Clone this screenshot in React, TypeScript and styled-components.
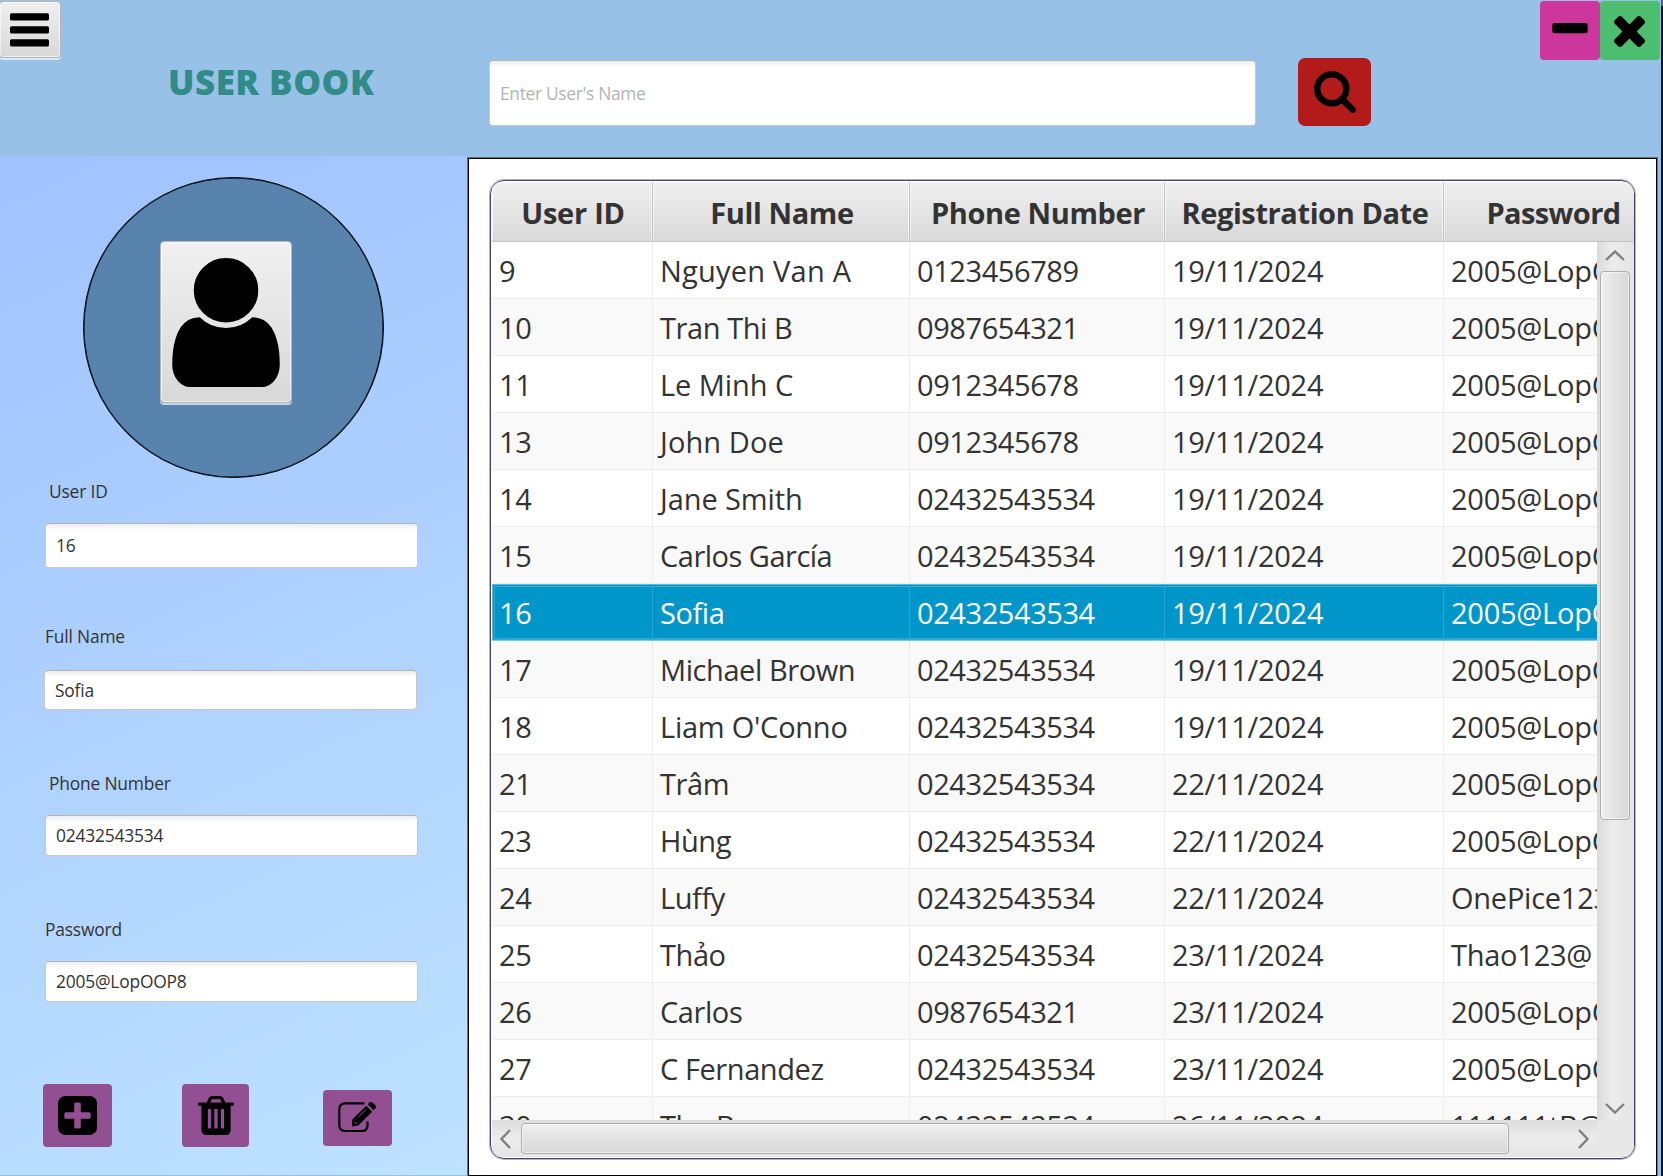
import React from "react";
import styled, { createGlobalStyle, css } from "styled-components";

const Global = createGlobalStyle`
  * { box-sizing: border-box; }
  body { margin: 0; overflow: hidden; }
  button { font: inherit; cursor: pointer; }
`;

const Window = styled.div`
  width: 1663px;
  height: 1176px;
  display: grid;
  grid-template-columns: 467px 1191px 3px 2px;
  grid-template-rows: 156px 1020px;
  background: #97c1e7;
  font-family: "Open Sans", "Noto Sans", sans-serif;
  color: #333333;
  overflow: hidden;
`;

const WindowEdge = styled.div`
  grid-column: 4;
  grid-row: 1 / 3;
  background: linear-gradient(#5b6068 0 6px, #10141c 6px);
`;

const Header = styled.header`
  grid-column: 1 / 4;
  grid-row: 1;
  display: flex;
  align-items: flex-start;
`;

const jfxButton = css`
  border: 1px solid #b5b5b5;
  background: linear-gradient(#f0f0f0, #d8d8d8);
  box-shadow: inset 0 0 0 1px rgba(255, 255, 255, 0.6), 0 2px 0 rgba(255, 255, 255, 0.65);
  border-radius: 4px;
`;

const MenuButton = styled.button`
  ${jfxButton}
  width: 62px;
  height: 57px;
  margin: 1px 0 0 -1px;
  padding: 10px 0 0 10px;
  display: flex;
`;

const Title = styled.h1`
  margin: 59px 0 0 107px;
  width: 321px;
  font-size: 35px;
  line-height: 46px;
  font-weight: 800;
  letter-spacing: 0.48px;
  color: #318b87;
  white-space: nowrap;
`;

const inputLook = css`
  border: 1px solid #c8c8c8;
  border-top-color: #b4b4b4;
  border-radius: 4px;
  background: linear-gradient(#ececec, #ffffff 6px);
  font-family: inherit;
  color: #333333;
  outline: none;
`;

const SearchInput = styled.input`
  ${inputLook}
  width: 767px;
  height: 66px;
  margin-top: 60px;
  padding: 0 10px;
  font-size: 17.4px;
  letter-spacing: -0.32px;
  &::placeholder { color: #b3b3b3; opacity: 1; }
`;

const ColorButton = styled.button<{ $w: number; $h: number; $bg: string; $r?: number }>`
  flex: none;
  width: ${(p) => p.$w}px;
  height: ${(p) => p.$h}px;
  border: 0;
  padding: 0;
  border-radius: ${(p) => p.$r ?? 4}px;
  background: ${(p) => p.$bg};
  display: flex;
  align-items: center;
  justify-content: center;
`;

const SearchButton = styled(ColorButton)`
  margin: 58px 0 0 42px;
`;

const WindowButtons = styled.div`
  display: flex;
  margin: 1px 1px 0 auto;
  svg { margin: 1px 1px 0 0; }
`;

const Sidebar = styled.aside`
  grid-column: 1;
  grid-row: 2;
  background: linear-gradient(155.4deg, #a0c2ff, #bee2ff);
  border-bottom: 1px solid #97c1e7;
  display: flex;
  flex-direction: column;
`;

const Avatar = styled.div`
  width: 301px;
  height: 301px;
  margin: 21px 0 0 83px;
  border-radius: 50%;
  border: 1px solid #000;
  box-shadow: inset 0 0 0 0.5px #000;
  background: #5783ad;
  display: flex;
  flex: none;
`;

const AvatarButton = styled.button`
  ${jfxButton}
  width: 132px;
  height: 162px;
  margin: 63px 0 0 76px;
  padding: 0;
  display: flex;
  align-items: flex-start;
  justify-content: center;
  svg { margin-top: 16px; }
`;

const Field = styled.label<{ $gap: number; $h: number; $shift?: number; $indent?: number; $space: number }>`
  display: flex;
  flex-direction: column;
  margin-top: ${(p) => p.$gap}px;
  margin-left: ${(p) => 45 - (p.$shift ?? 0)}px;
  width: 373px;
  span {
    font-size: 17.4px;
    line-height: 24px;
    letter-spacing: -0.18px;
    padding-left: ${(p) => (p.$indent ?? 0) + (p.$shift ?? 0)}px;
  }
  input {
    ${inputLook}
    margin-top: ${(p) => p.$space}px;
    height: ${(p) => p.$h}px;
    padding: 0 10px 1px;
    font-size: 17.4px;
    letter-spacing: -0.2px;
  }
`;

const Actions = styled.div`
  display: flex;
  margin: 82px 0 0 43px;
  align-items: flex-start;
`;

const DeleteButton = styled(ColorButton)`
  margin-left: 70px;
`;

const EditButton = styled(ColorButton)`
  margin: 6px 0 0 74px;
`;

const Content = styled.main`
  grid-column: 2;
  grid-row: 2;
  margin: 2px 1px 0;
  border: 1px solid #000;
  box-shadow: 0 0 0 1px rgba(0, 0, 0, 0.4);
  background: #fff;
  padding: 21px 21px 0;
`;

const TableFrame = styled.div`
  width: 1145px;
  height: 979px;
  border: 1px solid #45436b;
  box-shadow: 0 0 0 1px rgba(69, 67, 107, 0.4);
  border-radius: 14px;
  padding: 1px 0 0 1px;
  overflow: hidden;
`;

const columns = "161px 257px 255px 279px 305px";

const TableHead = styled.div`
  display: grid;
  grid-template-columns: ${columns};
  height: 60px;
  border-bottom: 1px solid #c3c3c3;
  overflow: hidden;
`;

const HeadCell = styled.div<{ $tracking: number }>`
  border-right: 1px solid #c3c3c3;
  box-shadow: inset 0 0 0 1px rgba(255, 255, 255, 0.55);
  background: linear-gradient(#f0f0f0, #d8d8d8);
  font-weight: 700;
  font-size: 29px;
  letter-spacing: ${(p) => p.$tracking}px;
  line-height: 62px;
  padding-left: 2px;
  text-align: center;
  white-space: nowrap;
  &:last-child { padding-right: 87px; }
`;

const TableBody = styled.div`
  display: grid;
  grid-template-columns: 1105px 37px;
  grid-template-rows: 878px 37px;
`;

const Viewport = styled.div`
  overflow: hidden;
`;

const Row = styled.div<{ $odd: boolean; $selected: boolean }>`
  display: grid;
  grid-template-columns: ${columns};
  width: 1257px;
  height: 57px;
  background: ${(p) => (p.$odd ? "#f9f9f9" : "#ffffff")};
  border-bottom: 1px solid #ededed;
  ${(p) =>
    p.$selected &&
    css`
      background: #0096c9;
      color: #fff;
      border-bottom: 1px solid #86cbe3;
      box-shadow: inset 1px 1px 0 #5cb9da, inset 2px 2px 0 #0096c9, inset 3px 3px 0 #30a9d3, inset 0 -2px 0 #30a9d3;
    `}
`;

const Cell = styled.div<{ $selected: boolean; $tracking: number }>`
  border-right: 1px solid ${(p) => (p.$selected ? "#29a6d1" : "#ededed")};
  padding-left: 7px;
  font-size: 29px;
  line-height: 58px;
  letter-spacing: ${(p) => p.$tracking}px;
  white-space: pre;
`;

const VBar = styled.div`
  background: linear-gradient(90deg, #dcdcdc, #ececec 40%, #e4e4e4);
  border-left: 1px solid #dcdcdc;
  display: flex;
  flex-direction: column;
  align-items: center;
  padding: 8px 3px 6px 0;
`;

const VThumb = styled.div`
  width: 30px;
  height: 549px;
  margin: 10px 0 auto 0;
  border: 1px solid #adadad;
  border-radius: 4px;
  background: linear-gradient(90deg, #eeeeee, #d8d8d8);
  box-shadow: inset 0 0 0 1px rgba(255, 255, 255, 0.5);
`;

const HBar = styled.div`
  background: linear-gradient(#dedede, #ececec 50%, #e4e4e4);
  border-top: 1px solid #dcdcdc;
  display: flex;
  align-items: center;
  padding: 0 8px 1px;
`;

const HThumb = styled.div`
  width: 988px;
  height: 31px;
  margin: 0 auto 0 10px;
  border: 1px solid #adadad;
  border-radius: 4px;
  background: linear-gradient(#eeeeee, #d8d8d8);
  box-shadow: inset 0 0 0 1px rgba(255, 255, 255, 0.5);
`;

const Corner = styled.div`
  background: #e8e8e8;
`;

const Glyph = ({ d, box, w, h }: { d: string; box: string; w: number; h: number }) => (
  <svg width={w} height={h} viewBox={box} fill="#000" fillRule="evenodd">
    <path d={d} />
  </svg>
);

const Chevron = ({ w, h, points }: { w: number; h: number; points: string }) => (
  <svg width={w} height={h} viewBox={`0 0 ${w} ${h}`} fill="none" stroke="#808080" strokeWidth="2.4">
    <polyline points={points} />
  </svg>
);

const USER =
  "M1536 1399q0 109-62.5 187t-150.5 78h-854q-88 0-150.5-78t-62.5-187q0-85 8.5-160.5t31.5-152 58.5-131 94-89 134.5-34.5q131 128 313 128t313-128q76 0 134.5 34.5t94 89 58.5 131 31.5 152 8.5 160.5zm-256-887q0 159-112.5 271.5t-271.5 112.5-271.5-112.5-112.5-271.5 112.5-271.5 271.5-112.5 271.5 112.5 112.5 271.5z";
const SEARCH =
  "M1216 832q0-185-131.5-316.5t-316.5-131.5-316.5 131.5-131.5 316.5 131.5 316.5 316.5 131.5 316.5-131.5 131.5-316.5zm512 832q0 52-38 90t-90 38q-54 0-90-38l-343-342q-179 124-399 124-143 0-273.5-55.5t-225-150-150-225-55.5-273.5 55.5-273.5 150-225 225-150 273.5-55.5 273.5 55.5 225 150 150 225 55.5 273.5q0 220-124 399l343 343q37 37 37 90z";
const TIMES =
  "M1490 1322q0 40-28 68l-136 136q-28 28-68 28t-68-28l-294-294-294 294q-28 28-68 28t-68-28l-136-136q-28-28-28-68t28-68l294-294-294-294q-28-28-28-68t28-68l136-136q28-28 68-28t68 28l294 294 294-294q28-28 68-28t68 28l136 136q28 28 28 68t-28 68l-294 294 294 294q28 28 28 68z";
const TRASH =
  "M704 1376v-704q0-14-9-23t-23-9h-64q-14 0-23 9t-9 23v704q0 14 9 23t23 9h64q14 0 23-9t9-23zm256 0v-704q0-14-9-23t-23-9h-64q-14 0-23 9t-9 23v704q0 14 9 23t23 9h64q14 0 23-9t9-23zm256 0v-704q0-14-9-23t-23-9h-64q-14 0-23 9t-9 23v704q0 14 9 23t23 9h64q14 0 23-9t9-23zm-544-992h448l-48-117q-7-9-17-11h-317q-10 2-17 11zm928 32v64q0 14-9 23t-23 9h-96v948q0 83-47 143.5t-113 60.5h-832q-66 0-113-58.5t-47-141.5v-952h-96q-14 0-23-9t-9-23v-64q0-14 9-23t23-9h309l70-167q15-37 54-63t79-26h320q40 0 79 26t54 63l70 167h309q14 0 23 9t9 23z";

type User = [string, string, string, string, string];
const LOP = "2005@LopOOP8";
const users: User[] = [
  ["9", "Nguyen Van A", "0123456789", "19/11/2024", LOP],
  ["10", "Tran Thi B", "0987654321", "19/11/2024", LOP],
  ["11", "Le Minh C", "0912345678", "19/11/2024", LOP],
  ["13", "John Doe", "0912345678", "19/11/2024", LOP],
  ["14", "Jane Smith", "02432543534", "19/11/2024", LOP],
  ["15", "Carlos García", "02432543534", "19/11/2024", LOP],
  ["16", "Sofia", "02432543534", "19/11/2024", LOP],
  ["17", "Michael Brown", "02432543534", "19/11/2024", LOP],
  ["18", "Liam O'Conno", "02432543534", "19/11/2024", LOP],
  ["21", "Trâm", "02432543534", "22/11/2024", LOP],
  ["23", "Hùng", "02432543534", "22/11/2024", LOP],
  ["24", "Luffy", "02432543534", "22/11/2024", "OnePice123"],
  ["25", "Thảo", "02432543534", "23/11/2024", "Thao123@"],
  ["26", "Carlos", "0987654321", "23/11/2024", LOP],
  ["27", "C Fernandez", "02432543534", "23/11/2024", LOP],
  ["30", "The Bao", "02432543534", "26/11/2024", "111111tB@"],
];

const columnTracking = [-0.42, -0.42, -0.42, -0.27, -0.25];
const nameTracking: Record<string, number> = {
  "Nguyen Van A": 0.22,
  "Le Minh C": -0.05,
  "John Doe": 0.1,
  "Jane Smith": -0.1,
  "Liam O'Conno": -0.25,
  "Carlos García": -0.5,
};

const headings: [string, number][] = [
  ["User ID", -0.25],
  ["Full Name", -0.4],
  ["Phone Number", -0.4],
  ["Registration Date", -0.4],
  ["Password", -0.6],
];
const selectedId = "16";

export default function App() {
  return (
    <Window>
      <Global />
      <Header>
        <MenuButton aria-label="Menu">
          <svg width="39" height="35" viewBox="0 0 39 35">
            <rect y="1.3" width="39" height="7.2" rx="1.6" />
            <rect y="14.3" width="39" height="7.2" rx="1.6" />
            <rect y="27.3" width="39" height="7.2" rx="1.6" />
          </svg>
        </MenuButton>
        <Title>USER BOOK</Title>
        <SearchInput placeholder="Enter User's Name" />
        <SearchButton $w={73} $h={68} $bg="#b31a1a" $r={7} aria-label="Search">
          <Glyph d={SEARCH} box="64 128 1664 1664" w={42} h={42} />
        </SearchButton>
        <WindowButtons>
          <ColorButton $w={60} $h={59} $bg="#cc369d" aria-label="Minimize">
            <svg width="36" height="16" viewBox="0 0 36 16">
              <rect x="0.3" y="0" width="35.4" height="10.2" rx="2.2" />
            </svg>
          </ColorButton>
          <ColorButton $w={60} $h={59} $bg="#4dbd70" aria-label="Close">
            <Glyph d={TIMES} box="302 366 1188 1188" w={31} h={31} />
          </ColorButton>
        </WindowButtons>
      </Header>

      <Sidebar>
        <Avatar>
          <AvatarButton aria-label="User">
            <Glyph d={USER} box="256 128 1280 1536" w={108} h={129} />
          </AvatarButton>
        </Avatar>
        <Field $gap={1} $h={45} $indent={4} $space={20}>
          <span>User ID</span>
          <input defaultValue="16" />
        </Field>
        <Field $gap={56} $h={40} $shift={1} $space={22}>
          <span>Full Name</span>
          <input defaultValue="Sofia" />
        </Field>
        <Field $gap={61} $h={41} $indent={4} $space={20}>
          <span>Phone Number</span>
          <input defaultValue="02432543534" />
        </Field>
        <Field $gap={61} $h={41} $space={20}>
          <span>Password</span>
          <input defaultValue={LOP} />
        </Field>
        <Actions>
          <ColorButton $w={69} $h={63} $bg="#925093" aria-label="Add">
            <svg width="39" height="39" viewBox="0 0 39 39">
              <rect width="39" height="39" rx="7.3" />
              <path
                d="M17.6 6.5h3.8q1.4 0 1.4 1.4v8.3h8.3q1.6 0 1.6 1.6v3.4q0 1.6-1.6 1.6h-8.3v8.3q0 1.4-1.4 1.4h-3.8q-1.4 0-1.4-1.4v-8.3h-8.3q-1.6 0-1.6-1.6v-3.4q0-1.6 1.6-1.6h8.3v-8.3q0-1.4 1.4-1.4z"
                fill="#925093"
              />
            </svg>
          </ColorButton>
          <DeleteButton $w={67} $h={63} $bg="#925093" aria-label="Delete">
            <Glyph d={TRASH} box="192 128 1408 1536" w={36} h={39} />
          </DeleteButton>
          <EditButton $w={69} $h={56} $bg="#925093" aria-label="Edit">
            <svg width="39" height="35" viewBox="0 0 39 35">
              <path
                d="M26.5 2.4H7.5Q1.3 2.4 1.3 8.5V24.500Q1.3 30 7.5 30h16.500q5.500 0 5.500-5.500V20.500"
                fill="none"
                stroke="#000"
                strokeWidth="2.2"
              />
              <path d="M14.300 18.500 28.200 4.700 34.200 10.700 20.300 24.600 14 25.600z" />
              <path d="M29.700 3.200 31.800 1.200q1.200-1.100 2.400 0l3.500 3.500q1.200 1.200 0 2.400l-2.100 2.100z" />
              <path d="M16.500 20.500 18.900 22.900M20.500 16 28 8.500" stroke="#925093" strokeWidth="1" />
            </svg>
          </EditButton>
        </Actions>
      </Sidebar>

      <Content>
        <TableFrame>
          <TableHead>
            {headings.map(([label, tracking]) => (
              <HeadCell key={label} $tracking={tracking}>
                {label}
              </HeadCell>
            ))}
          </TableHead>
          <TableBody>
            <Viewport>
              {users.map((u, i) => {
                const selected = u[0] === selectedId;
                return (
                  <Row key={u[0]} $odd={i % 2 === 1} $selected={selected}>
                    {u.map((value, c) => (
                      <Cell key={c} $selected={selected} $tracking={nameTracking[value] ?? columnTracking[c]}>
                        {value}
                      </Cell>
                    ))}
                  </Row>
                );
              })}
            </Viewport>
            <VBar>
              <Chevron w={20} h={11} points="1,10 10,1.500 19,10" />
              <VThumb />
              <Chevron w={20} h={11} points="1,1 10,9.500 19,1" />
            </VBar>
            <HBar>
              <Chevron w={11} h={20} points="10,1 1.500,10 10,19" />
              <HThumb />
              <Chevron w={11} h={20} points="1,1 9.500,10 1,19" />
            </HBar>
            <Corner />
          </TableBody>
        </TableFrame>
      </Content>
      <WindowEdge />
    </Window>
  );
}
